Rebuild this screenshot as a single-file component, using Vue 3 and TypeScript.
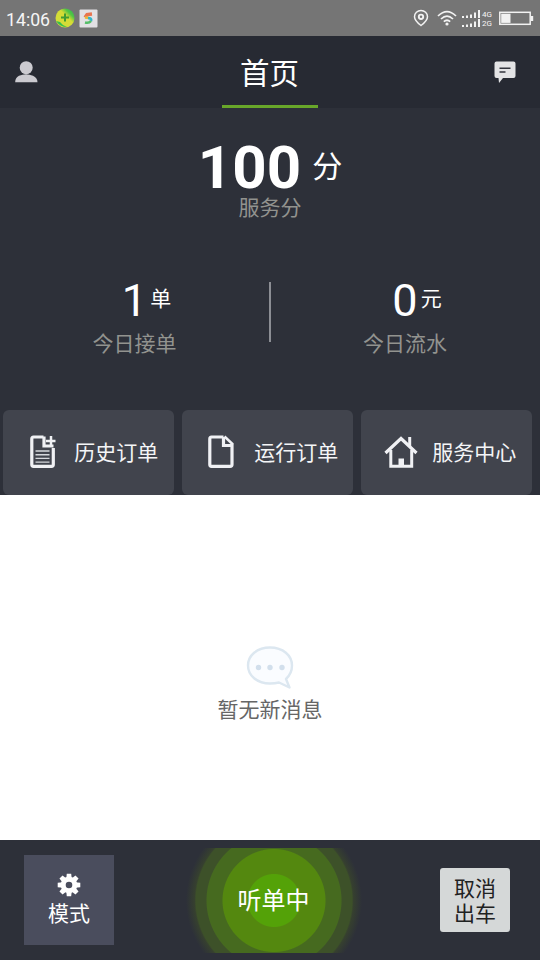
<script setup lang="ts">
interface Stat {
  value: number
  unit: string
  label: string
}

interface Entry {
  icon: 'history' | 'file' | 'home'
  label: string
}

const stats: Stat[] = [
  { value: 1, unit: '单', label: '今日接单' },
  { value: 0, unit: '元', label: '今日流水' },
]

const entries: Entry[] = [
  { icon: 'history', label: '历史订单' },
  { icon: 'file', label: '运行订单' },
  { icon: 'home', label: '服务中心' },
]

const teeth: number[] = [0, 45, 90, 135, 180, 225, 270, 315]
</script>

<template>
  <div class="screen">
    <div class="status">
      <span class="clock">14:06</span>
      <svg class="app-a" width="20" height="20" viewBox="0 0 20 20">
        <defs>
          <linearGradient id="ball" x1="1" y1="0" x2="0" y2="1">
            <stop offset="0" stop-color="#22bb55" />
            <stop offset="0.25" stop-color="#52c544" />
            <stop offset="0.42" stop-color="#d5dc35" />
            <stop offset="1" stop-color="#d2de3a" />
          </linearGradient>
        </defs>
        <circle cx="10" cy="10" r="9.5" fill="url(#ball)" />
        <path d="M1 13 Q5 19 12 19 Q7 17 5 14z" fill="#35bd50" />
        <path d="M10 5.5v8M6 9.5h8" stroke="#3f9c32" stroke-width="2" />
      </svg>
      <svg class="app-b" width="19" height="19" viewBox="0 0 19 19">
        <rect x="0.5" y="0.5" width="18" height="18" rx="1" fill="#e2e0e4" />
        <path d="M13 5 8 5.500 6 8.5" fill="none" stroke="#e8744f" stroke-width="3.400" />
        <path d="M6 8.5 10 9" stroke="#e8b93c" stroke-width="2.6" />
        <path d="M9 9 Q13 9 12 12" fill="none" stroke="#35b4c8" stroke-width="2.6" />
        <path d="M12 12 Q10 14.5 6 13.5" fill="none" stroke="#55bd68" stroke-width="2.6" />
      </svg>
      <div class="spacer"></div>
      <svg width="16" height="18" viewBox="0 0 16 18" fill="none" stroke="#f2f2f2">
        <path d="M8 16.500 Q1.5 11.5 1.5 7.7 A6.5 6.2 0 0 1 14.5 7.7 Q14.5 11.5 8 16.500z" stroke-width="1.5" />
        <circle cx="8" cy="7.8" r="2.2" stroke-width="1.9" />
      </svg>
      <svg class="wifi" width="20" height="16" viewBox="0 0 20 16" fill="none" stroke="#f2f2f2" stroke-width="1.7">
        <path d="M1 6 Q10 -2.8 19 6M4 9 Q10 3.2 16 9M6.8 11.7 Q10 8.8 13.2 11.7" />
        <circle cx="10" cy="14" r="1.6" fill="#f2f2f2" stroke="none" />
      </svg>
      <div class="signals">
        <div v-for="net in ['4G', '2G']" :key="net" class="signal">
          <svg width="18" height="8" viewBox="0 0 18 8" fill="#f2f2f2">
            <path d="M0 6h2v2H0zM4 5.5h2V8H4zM8 4.5h2V8H8zM12 2.5h2V8h-2zM16 0h2v8h-2z" />
          </svg>
          <span>{{ net }}</span>
        </div>
      </div>
      <svg class="battery" width="35" height="15" viewBox="0 0 35 15">
        <rect x="0.8" y="1.3" width="30.4" height="12" fill="none" stroke="#f2f2f2" stroke-width="1.5" />
        <rect x="2.2" y="2.7" width="9.300" height="9.2" fill="#f2f2f2" />
        <path d="M32 5h2.2v5H32z" fill="#f2f2f2" />
      </svg>
    </div>

    <header class="header">
      <svg width="24" height="24" viewBox="0 0 24 24" fill="#cbcad0">
        <circle cx="12.200" cy="7.7" r="6.5" />
        <path d="M1.200 22.300 Q1 18 5 15.800 Q12 12.600 19 15.800 Q23.500 18 23.500 22.300z" />
      </svg>
      <h1>首页</h1>
      <svg width="22" height="24" viewBox="0 0 22 24">
        <path d="M2.5 1.500h17q2 0 2 2v12.500q0 2-2 2H9L5 23 4.500 18h-2q-2 0-2-2V3.500q0-2 2-2z" fill="#e3e3e5" />
        <path d="M5.500 8.200h11M5.500 12h6" stroke="#33353d" stroke-width="1.500" />
      </svg>
    </header>

    <section class="summary">
      <div class="score">
        <strong>100</strong>
        <span>分</span>
      </div>
      <p class="caption">服务分</p>
      <div class="stats">
        <div v-for="s in stats" :key="s.label" class="stat">
          <div class="figure">
            <span></span>
            <b>{{ s.value }}</b>
            <i>{{ s.unit }}</i>
          </div>
          <p class="caption">{{ s.label }}</p>
        </div>
      </div>
      <nav class="entries">
        <a v-for="e in entries" :key="e.icon" class="entry" :class="e.icon">
          <svg width="34" height="36" viewBox="0 0 34 36" fill="none" stroke="#f0f1f4" stroke-width="3.200">
            <template v-if="e.icon === 'history'">
              <path d="M16.500 3H6.500Q4.800 3 4.800 5V30.500Q4.800 32.300 6.500 32.300H24.500Q26.300 32.300 26.300 30.500V14M17 2.500V12H26.500" />
              <path d="M24 2v10M19 7h9.500" stroke-width="2.500" />
              <path d="M8.500 17h14M8.500 20.700h14M8.500 24.400h14M8.500 28.100h14" stroke-width="1.400" stroke="#d5d7dc" />
            </template>
            <template v-else-if="e.icon === 'file'">
              <path d="M17.500 3H5.500Q3.800 3 3.800 5V30.500Q3.800 32.300 5.500 32.300H24Q26 32.300 26 30.500V11.500H17.500V3" />
              <path d="M18.500 2.500 27 10.500" stroke-width="2.500" />
            </template>
            <template v-else>
              <path d="M1.500 19 17 4.500 32.500 19" />
              <path d="M6.800 16V32.300H27.700V16M25.700 12V3" stroke-width="3" />
              <path d="M14.500 32v-7.500h5.500V32z" fill="#f0f1f4" stroke="none" />
            </template>
          </svg>
          <span>{{ e.label }}</span>
        </a>
      </nav>
    </section>

    <main class="empty">
      <svg width="50" height="46" viewBox="0 0 50 46">
        <path
          d="M25 2.500C12 2.500 3 10.500 3 20.500S12 38.500 25 38.500Q30 38.500 34 37.500L44.500 42.500 41 34Q47 28.500 47 20.500C47 10.500 38 2.500 25 2.500z"
          fill="#fafcff"
          stroke="#dce7f0"
          stroke-width="2.400"
          stroke-linejoin="round"
        />
        <g fill="#d2dfec">
          <circle cx="13.500" cy="22.500" r="2.700" />
          <circle cx="25" cy="22.500" r="2.700" />
          <circle cx="37" cy="22.500" r="2.700" />
        </g>
      </svg>
      <p>暂无新消息</p>
    </main>

    <footer class="footer">
      <button class="mode">
        <svg width="24" height="24" viewBox="-12 -12 24 24">
          <path v-for="t in teeth" :key="t" d="M-2.800-6-2.200-11.300H2.200L2.800-6z" fill="#fff" :transform="`rotate(${t})`" />
          <circle r="5.800" fill="none" stroke="#fff" stroke-width="5" />
        </svg>
        <span>模式</span>
      </button>
      <div class="listening">
        <span class="disc">听单中</span>
      </div>
      <button class="cancel"><span>取消</span><span>出车</span></button>
    </footer>
  </div>
</template>

<style>
body {
  margin: 0;
}
</style>

<style scoped>
.screen {
  width: 540px;
  height: 960px;
  display: flex;
  flex-direction: column;
  overflow: hidden;
  background: #fff;
  font-family: "Noto Sans CJK SC", sans-serif;
}
svg {
  display: block;
  flex: none;
}
p,
h1 {
  margin: 0;
  font-weight: 400;
}
button {
  border: 0;
  padding: 0;
  font: inherit;
}
.status {
  box-sizing: border-box;
  height: 36px;
  padding: 0 6px;
  display: flex;
  align-items: center;
  background: #757575;
  color: #f5f5f5;
}
.clock {
  width: 49px;
  font: 17.700px/36px Roboto, sans-serif;
  padding-top: 3px;
}
.app-b {
  margin-left: 4px;
}
.spacer {
  flex: 1;
}
.wifi {
  margin: 0 5px 0 8px;
}
.signals {
  display: grid;
  gap: 1px;
}
.signal {
  display: flex;
  gap: 2px;
  height: 8px;
  font: 8px/9px Roboto, sans-serif;
}
.battery {
  margin-left: 7px;
  margin-top: 1px;
}
.header {
  box-sizing: border-box;
  height: 72px;
  padding: 0 24px 0 14px;
  display: flex;
  align-items: center;
  justify-content: space-between;
  background: #272a33;
}
.header h1 {
  box-sizing: border-box;
  width: 96px;
  height: 72px;
  margin-left: 7px;
  border-bottom: 3px solid #68a62a;
  color: #fff;
  font-size: 29.500px;
  line-height: 71px;
  text-align: center;
}
.summary {
  height: 387px;
  display: flex;
  flex-direction: column;
  background: #2d3039;
}
.score {
  display: flex;
  justify-content: center;
  gap: 11px;
  padding-top: 35px;
  height: 51px;
  color: #fff;
}
.score strong {
  font: 700 60px/50px Roboto, sans-serif;
}
.score span {
  font-size: 30px;
  line-height: 30px;
  margin-top: 6px;
}
.caption {
  color: #92938f;
  font-size: 21px;
  line-height: 24px;
  text-align: center;
}
.stats {
  display: grid;
  grid-template-columns: 1fr 1fr;
  height: 60px;
  margin-top: 64px;
}
.stat {
  height: 60px;
  padding-right: 1px;
}
.stat + .stat {
  border-left: 2px solid #8c8e94;
  margin-left: -1px;
}
.figure {
  display: grid;
  grid-template-columns: 1fr auto 1fr;
  column-gap: 3px;
  height: 48px;
  margin-top: -4px;
  color: #fff;
}
.figure b {
  font: 400 45px/45px Roboto, sans-serif;
}
.figure i {
  font-style: normal;
  font-size: 21px;
  line-height: 24px;
  margin-top: 7px;
}
.stat .caption {
  margin-top: 4px;
}
.entries {
  display: grid;
  grid-template-columns: repeat(3, 171px);
  gap: 8px;
  padding-left: 3.300px;
  margin-top: 67.500px;
  height: 85.300px;
}
.entry {
  display: flex;
  align-items: center;
  gap: 13px;
  padding-left: 24px;
  border-radius: 6px;
  background: #41444d;
  color: #f4f5f7;
  font-size: 21px;
  line-height: 24px;
  white-space: nowrap;
}
.entry span {
  margin-top: -2px;
}
.home {
  gap: 14px;
  padding-left: 23px;
}
.file {
  gap: 14px;
}
.empty {
  flex: 1;
  display: flex;
  flex-direction: column;
  align-items: center;
  padding-top: 150px;
}
.empty p {
  margin-top: 5px;
  color: #666;
  font-size: 21px;
  line-height: 24px;
}
.footer {
  box-sizing: border-box;
  height: 120px;
  padding: 0 30px 0 24px;
  display: flex;
  align-items: center;
  justify-content: space-between;
  background: #2d3039;
}
.mode {
  width: 90px;
  height: 90px;
  display: flex;
  flex-direction: column;
  align-items: center;
  background: #4a4d5d;
  color: #fff;
  font-size: 21px;
  line-height: 24px;
}
.mode svg {
  margin: 18px 0 4px;
}
.mode span {
  margin-top: -1px;
}
.listening {
  width: 176px;
  height: 105px;
  margin-right: 7px;
  display: grid;
  place-items: center;
  background: radial-gradient(
    circle at center,
    #54a208 26px,
    #54880f 27px 51px,
    #466a1f 52px 67px,
    #3d5129 68px 78px,
    #36402f 79.500px,
    #2d3039 88px
  );
}
.disc {
  color: #fff;
  font-size: 24px;
  line-height: 28px;
  margin-top: -2px;
}
.cancel {
  width: 70px;
  height: 64px;
  display: flex;
  flex-direction: column;
  align-items: center;
  justify-content: center;
  border-radius: 3px;
  background: #d5d8d8;
  color: #1f2222;
  font-size: 21px;
  line-height: 25px;
}
</style>
